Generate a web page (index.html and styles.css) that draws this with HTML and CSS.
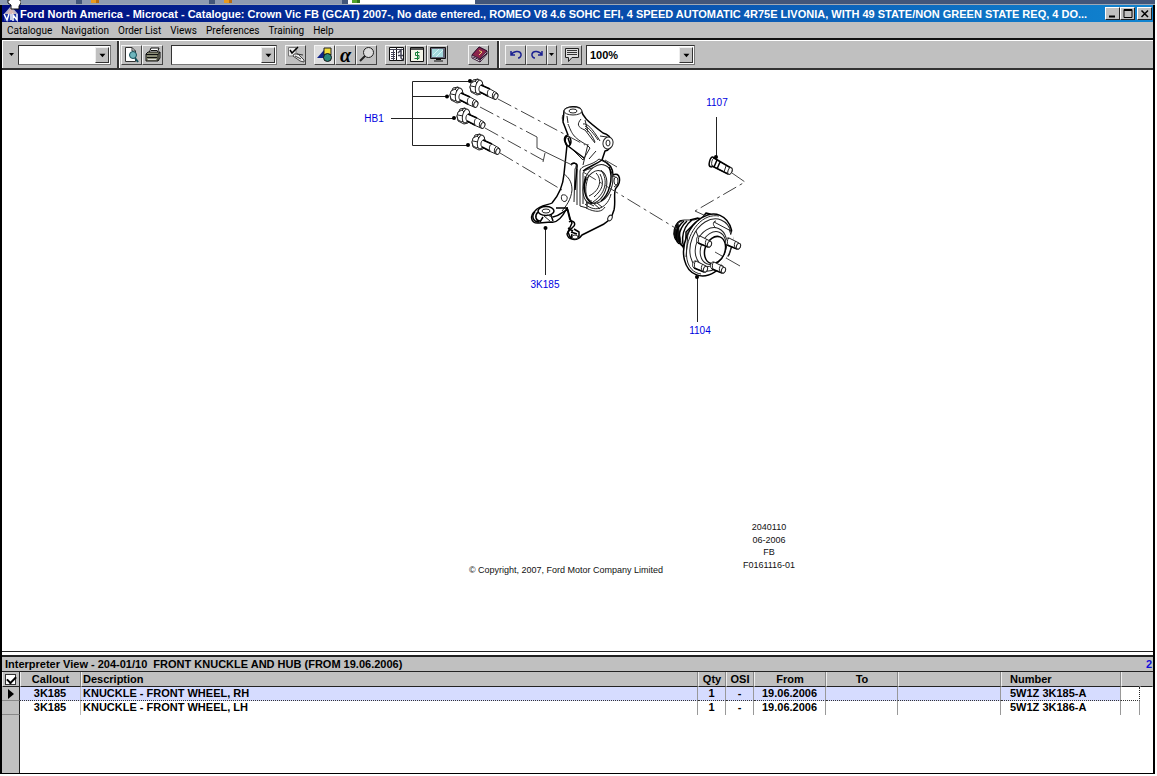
FILE: index.html
```html
<!DOCTYPE html>
<html lang="en">
<head>
<meta charset="utf-8">
<title>Microcat - Catalogue</title>
<link rel="stylesheet" href="styles.css">
</head>
<body>
<div class="taskbar" aria-hidden="true">
  <span class="task task-first"></span>
  <span class="task"><i class="task-icon"></i></span>
  <span class="task"><i class="task-icon"></i></span>
  <span class="task task-active"><i class="task-icon task-icon-green"></i></span>
</div>
<svg class="pointer" viewBox="0 0 14 10" aria-hidden="true"><path d="M1 0V3L4 5V9H12V6L14 3V0Z" fill="#fff" stroke="#111"/><path d="M3 0H12V3H3Z" fill="#fff"/></svg>
<main class="window">
  <header class="titlebar">
    <svg class="app-icon" viewBox="0 0 16 16" aria-hidden="true"><path d="M8 0L15 8H1Z" fill="#b9b4c9"/><path d="M8 2L12 8H4Z" fill="#d8b8b8"/><path d="M1 8H15V15H1Z" fill="#2038a8"/><path d="M1 8L4 14L6 8M8 8V14M10 15V9L14 14V8" stroke="#fff" stroke-width="1.5" fill="none"/></svg>
    <h1 class="title">Ford North America - Microcat - Catalogue: Crown Vic FB (GCAT) 2007-, No date entered., ROMEO V8 4.6 SOHC EFI, 4 SPEED AUTOMATIC 4R75E LIVONIA, WITH 49 STATE/NON GREEN STATE REQ, 4 DO...</h1>
    <div class="window-buttons">
      <button class="win-btn" aria-label="Minimize"><svg viewBox="0 0 12 10"><path d="M2 7.5H8" stroke="#000" stroke-width="2"/></svg></button>
      <button class="win-btn" aria-label="Maximize"><svg viewBox="0 0 12 10"><path d="M2 .5H10V8.500H2ZM2 1.500H10" stroke="#000" fill="none"/></svg></button>
      <button class="win-btn win-close" aria-label="Close"><svg viewBox="0 0 12 10"><path d="M2.500 1.500L9 8M9 1.500L2.500 8" stroke="#000" stroke-width="1.500"/></svg></button>
    </div>
  </header>
  <nav class="menubar">
    <button>Catalogue</button><button>Navigation</button><button>Order List</button><button>Views</button><button>Preferences</button><button>Training</button><button>Help</button>
  </nav>
  <div class="toolbar">
    <div class="tool-group group-history">
      <button class="mini-arrow" aria-label="History"><svg viewBox="0 0 6 4"><path d="M0 0H5L2.500 3Z"/></svg></button>
      <div class="combo combo-nav"><select aria-label="Section"><option></option></select><svg class="drop" viewBox="0 0 14 15"><path d="M4 6H11L7.500 10Z"/></svg></div>
    </div>
    <div class="tool-group group-main">
      <div class="buttons">
        <button class="tool" aria-label="Preview"><svg viewBox="0 0 18 17"><path d="M2.500 1.500H9L12.500 5V15.500H2.500Z" fill="#fff" stroke="#333"/><path d="M9 1.500V5H12.500" fill="none" stroke="#333"/><circle cx="10" cy="9" r="3.500" fill="#6fb6bd" stroke="#174e58"/><path d="M12 12L15 16" stroke="#174e58" stroke-width="2"/></svg></button>
        <button class="tool" aria-label="Print"><svg viewBox="0 0 18 17"><path d="M5 7L7 2H15L13 7" fill="#fff" stroke="#111"/><path d="M2 8L4 6H16V12L14 15H2Z" fill="#8a8c76" stroke="#111"/><path d="M2 8.500H14L16 6M14 8V15M3 11.500H13M7 4.500H13" fill="none" stroke="#111"/><path d="M4 13.500H12" stroke="#ddd"/></svg></button>
      </div>
      <div class="combo combo-search"><select aria-label="Search"><option></option></select><svg class="drop" viewBox="0 0 14 15"><path d="M4 6H11L7.500 10Z"/></svg></div>
      <button class="tool" aria-label="Select callouts"><svg viewBox="0 0 18 17"><path d="M1.500 1.500H9V10H1.500Z" fill="#eee" stroke="#777"/><path d="M3 4L5 7L11 1" fill="none" stroke="#000" stroke-width="1.500"/><path d="M7 8L11 8L17 14V16L13 15L6 10Z" fill="#eee" stroke="#444"/><path d="M10 8L16 9M8 10L14 13" fill="none" stroke="#333"/></svg></button>
      <div class="buttons">
        <button class="tool tool-lit" aria-label="Graphics"><svg viewBox="0 0 18 17"><path d="M1 12L8 4V12Z" fill="#10248a"/><path d="M8 2H15V9H8Z" fill="#f1dd3a" stroke="#222"/><circle cx="11.500" cy="11.500" r="4" fill="#28877c" stroke="#111"/></svg></button>
        <button class="tool alpha" aria-label="Alphabetical">α</button>
        <button class="tool" aria-label="Zoom"><svg viewBox="0 0 18 17"><circle cx="10.500" cy="6.500" r="5" fill="#ddd" stroke="#222"/><path d="M7 10L2 15" stroke="#222" stroke-width="2"/></svg></button>
      </div>
      <div class="buttons view-buttons">
        <button class="tool" aria-label="Parts list"><svg viewBox="0 0 18 17"><path d="M2.500 1.500H9.500V14.500H2.500ZM9.500 1.500H16.500V14.500H9.500Z" fill="#fff" stroke="#111"/><path d="M3 3.500H16M4 6.500H8M4 8.500H8M4 10.500H8M4 12.500H8M6.500 3V14" stroke="#445"/><path d="M11 7L14 4V12L16 14M11 9.500H16" stroke="#445" stroke-width="1.500" fill="none"/></svg></button>
        <button class="tool" aria-label="Pricing"><svg viewBox="0 0 18 17"><path d="M2.500 1.500H15.500V15.500H2.500Z" fill="#f5f5e8" stroke="#111"/><path d="M3 3H15" stroke="#555" stroke-width="2"/><path d="M11.500 6.500H7.500V9.500H11V12.500H6.500M9.500 5V14" fill="none" stroke="#18803a"/></svg></button>
        <button class="tool" aria-label="Monitor"><svg viewBox="0 0 18 17"><path d="M1.500 1.500H16.500V12.500H1.500Z" fill="#667" stroke="#111"/><path d="M3 3H14V11H3Z" fill="#a5dadd"/><path d="M4 9L10 3M7 11L14 4" stroke="#d8f5f5"/><path d="M5 15H14M7 13.500H12" stroke="#111"/></svg></button>
      </div>
      <button class="tool" aria-label="Help book"><svg viewBox="0 0 18 17"><path d="M2 9L9 1L17 5V8L10 16L2 12Z" fill="#fff" stroke="#31122f"/><path d="M2 9L9 1L17 5L10 13Z" fill="#8b244b" stroke="#31122f"/><path d="M10 13V16M3 11L10 14L17 7" stroke="#31122f" fill="none"/><path d="M9 4.500L12 6L9 9" stroke="#f0d267" fill="none"/></svg></button>
    </div>
    <div class="tool-group group-zoom">
      <div class="buttons">
        <button class="tool" aria-label="Undo"><svg viewBox="0 0 18 17"><path d="M4 5V9H8M4 9C6 5 13 4 14 8C14.500 10 13 12 11 12" fill="none" stroke="#1b2191" stroke-width="1.500"/></svg></button>
        <button class="tool" aria-label="Redo"><svg viewBox="0 0 18 17"><path d="M14 5V9H10M14 9C12 5 5 4 4 8C3.500 10 5 12 7 12" fill="none" stroke="#1b2191" stroke-width="1.500"/></svg></button>
        <button class="tool tool-thin" aria-label="Redo list"><svg viewBox="0 0 6 4"><path d="M0 0H5L2.500 3Z"/></svg></button>
      </div>
      <button class="tool note" aria-label="Notes"><svg viewBox="0 0 18 17"><path d="M2.500 2.500H15.500V11.500H9L5.500 15.500V11.500H2.500Z" fill="#ddd" stroke="#222"/><path d="M4 4.500H14M4 6.500H14M4 8.500H14" stroke="#333"/></svg></button>
      <div class="combo combo-zoom"><select aria-label="Zoom level"><option>100%</option></select><svg class="drop" viewBox="0 0 14 15"><path d="M4 6H11L7.500 10Z"/></svg></div>
    </div>
  </div>

  <section class="canvas" aria-label="Exploded view">
    <svg class="diagram" viewBox="2 70 1151 581" role="img" aria-label="Front knuckle and hub">
      <defs>
        <g id="flange-bolt" class="part">
          <path d="M-4 -7L1 -8L5 -5L7 1L4 7L0 8L-6 5L-7 0Z"/>
          <path d="M-6 -4L-2 -6L1 -3L1 3L-2 6L-6 4L-7 0ZM-2 -6L1 -8M1 -3L5 -5M1 3L5 5M-6 -1L-1 0"/>
          <ellipse cx="2" cy="0" rx="3.500" ry="7" transform="rotate(12 2 0)"/>
          <path d="M4 -2L13 2L20 6C22 8 20 13 17 12L10 9L3 5C1 3 2 -1 4 -2Z"/>
          <path class="bold" d="M4 -2L13 2M3 5L11 9"/>
          <path d="M13 2C10 3 10 7 11 9M17 5C15 6 15 10 16 12"/><ellipse cx="19" cy="9.500" rx="2" ry="3" transform="rotate(20 19 9)"/>
        </g>
        <g id="stud" class="part">
          <path d="M1 -4L11 1C14 3 12 8 9 7L-1 3C-4 1 -2 -5 1 -4Z"/>
          <path class="bold" d="M-1 3L9 7"/>
          <path d="M1 -4C-1 -3 -1 1 0 3M8 -1C6 1 6 4 7 6"/><ellipse cx="10.500" cy="4" rx="2" ry="3" transform="rotate(20 10 4)"/>
        </g>
      </defs>

      <g class="leader">
        <path d="M470 81.500H412.500V145.500H469M391 118.500H454M412 96.500H447M545.500 228V275M716.500 117V157M697.500 278V322"/>
        <circle cx="470" cy="81" r="2"/><circle cx="447" cy="96.500" r="2"/><circle cx="454" cy="118" r="2"/><circle cx="468" cy="145" r="2"/><circle cx="545.500" cy="228" r="2"/><circle cx="716" cy="157" r="2"/><circle cx="697" cy="277" r="2"/>
      </g>

      <use href="#flange-bolt" x="477" y="87"/><use href="#flange-bolt" x="457" y="95"/><use href="#flange-bolt" x="464" y="116"/><use href="#flange-bolt" x="479" y="142"/>

      <g class="part knuckle">
        <path class="bold" d="M564 111C566 106 579 105 581 110C583 117 586 120 603 133C614 136 614 149 605 151L602 160C611 164 613 170 613 175C620 171 622 182 616 188C613 192 616 201 614 210C611 220 608 221 604 224L582 235C577 242 568 240 567 234L572 223C569 218 569 211 567 208C562 218 556 223 551 222L539 223C530 224 530 215 535 211C539 205 549 205 552 203C559 195 563 186 564 174L567 145C563 140 564 136 568 135L563 122Z"/>
        <ellipse cx="573" cy="111" rx="9" ry="4"/><ellipse cx="573" cy="111" rx="4" ry="2"/>
        <path d="M563 115C562 117 562 119 563 121M567 116L568 123M581 119C577 124 577 127 585 130L595 143M583 124C587 123 592 128 600 141M585 126C589 128 594 134 598 140M585 128C589 131 593 137 595 142M600 136L607 137M568 124C572 133 572 137 587 145L590 148L583 160L570 147"/>
        <path class="bold" d="M566 137C570 134 573 142 569 146C566 147 564 141 566 137M568 146L584 158M568 138L570 144"/>
        <path d="M585 120L588 132M588 144L583 165M596 151L589 159"/>
        <ellipse cx="608" cy="143" rx="5" ry="6" transform="rotate(15 608 143)"/><ellipse cx="608" cy="143" rx="2" ry="3"/>
        <path d="M564 174C568 177 572 181 572 190C571 200 566 206 562 211M571 164C575 161 578 164 575 169L574 202M577 169V205M580 206V171C580 165 592 166 599 159L607 163M583 204V173C584 169 594 168 604 165M587 205L585 176M580 206L587 208L587 202"/>
        <path class="bold" d="M571 165C573 162 578 163 577 167L575 190M583 171C590 166 595 165 602 160"/>
        <ellipse cx="598" cy="184" rx="14" ry="20" transform="rotate(20 598 184)"/>
        <ellipse cx="595" cy="187" rx="11" ry="17" transform="rotate(20 595 187)"/>
        <path class="bold" d="M586 177C583 187 584 199 592 203M609 167C614 178 609 195 601 201"/>
        <path d="M589 175C582 193 588 201 592 201M601 170C609 181 605 194 593 202M600 174C605 184 602 190 594 197M596 173C602 179 601 190 589 196M585 204C596 214 608 207 611 194M586 208C596 213 602 212 605 207M592 202L600 209M597 203L602 207M586 202L594 206"/>
        <path d="M613 176L617 178L618 184L614 187"/><ellipse cx="616" cy="181" rx="2" ry="4"/>
        <ellipse class="bold" cx="546" cy="211" rx="8" ry="4.500"/><ellipse cx="546" cy="211" rx="4" ry="2"/>
        <path class="bold" d="M535 212C531 216 533 222 539 222M538 212C534 216 536 221 540 221M543 217L540 222M551 215L553 221M556 208L568 208M553 217C560 216 563 211 567 210"/>
        <path d="M544 216L550 221M547 215L553 217M562 195C566 194 569 197 566 201C563 203 560 199 562 195"/>
        <path class="bold" d="M569 222C573 219 577 224 573 227L568 232L570 237L575 239L579 236V232L574 229M568 228L573 231M571 232L577 234M572 234L571 239M567 208L570 220"/>
        <ellipse cx="610" cy="218" rx="2" ry="3" transform="rotate(30 610 218)"/><ellipse cx="575" cy="237" rx="3" ry="2"/>
      </g>

      <g class="part">
        <ellipse class="dark" cx="681" cy="231" rx="7" ry="11" transform="rotate(12 681 231)"/>
        <path d="M678 223L684 220L694 220L700 218L702 252L690 251L684 250L681 243Z"/>
        <path class="bold" d="M684 221C674 229 674 244 681 244M687 221C677 230 677 244 684 247M692 220C680 229 680 248 689 252M696 222L686 232V246M690 220L698 218L702 222M703 217L706 213L710 214L713 217"/>
        <ellipse class="bold" cx="708" cy="245" rx="23" ry="32" transform="rotate(22 708 245)"/>
        <path d="M719 216C689 211 673 270 701 274"/>
        <ellipse cx="711" cy="245" rx="20" ry="27" transform="rotate(22 711 245)"/>
        <ellipse cx="711" cy="247" rx="15" ry="20" transform="rotate(22 711 247)"/>
        <ellipse cx="713" cy="248" rx="12" ry="17" transform="rotate(22 713 248)"/>
        <ellipse class="bold" cx="715" cy="250" rx="10" ry="14" transform="rotate(20 715 250)"/>
        <path d="M714 222L731 231M716 221C713 221 712 225 716 228M729 229L731 235M688 232L686 257M696 231L699 239"/>
        <path class="gap" d="M734 231L731 240M729 257L722 265"/>
        <use href="#stud" x="699" y="240"/><use href="#stud" x="728" y="242"/><use href="#stud" x="713" y="266"/><use href="#stud" x="695" y="265"/>
      </g>
      <g class="part">
        <ellipse class="bold" cx="712" cy="162" rx="2.500" ry="5" transform="rotate(15 712 162)"/>
        <path d="M714 158L731 168C734 170 731 175 728 174L712 166C711 163 712 159 714 158"/>
        <path class="bold" d="M714 158L731 168M712 166L728 174M717 160L714 167M720 162L717 169"/>
        <ellipse cx="730" cy="171" rx="2" ry="3.500" transform="rotate(20 730 171)"/>
        <path d="M726 166L724 172"/>
      </g>
      <g class="axis">
        <path class="dashed" d="M498 99L585 145M480 107L537 137M485 128L543 160M500 153L562 190M583 172L677 229M732 173L745 182L695 211"/>
        <path d="M537 137V148L572 165M543 162L545 153M605 160L617 167M695 211L706 216M715 252L722 256M726 258L740 266"/>
      </g>
      <g class="callout">
        <text x="374" y="122">HB1</text><text x="717" y="106">1107</text><text x="545" y="288">3K185</text><text x="700" y="334">1104</text>
      </g>
      <g class="caption">
        <text x="566" y="573">© Copyright, 2007, Ford Motor Company Limited</text>
        <text x="769" y="530">2040110</text><text x="769" y="543">06-2006</text><text x="769" y="555">FB</text><text x="769" y="568">F0161116-01</text>
      </g>
    </svg>
  </section>

  <section class="interpreter">
    <header class="panel-title"><h2>Interpreter View - 204-01/10&nbsp; FRONT KNUCKLE AND HUB (FROM 19.06.2006)</h2><span class="panel-count">2</span></header>
    <div class="grid">
      <table>
        <colgroup><col class="c-mark"><col class="c-callout"><col><col class="c-small"><col class="c-small"><col class="c-date"><col class="c-date"><col class="c-blank"><col class="c-number"><col class="c-end"><col class="c-rest"></colgroup>
        <thead><tr><th><input type="checkbox" checked aria-label="Select all"></th><th>Callout</th><th class="left">Description</th><th>Qty</th><th>OSI</th><th>From</th><th>To</th><th></th><th class="number">Number</th><th></th><th></th></tr></thead>
        <tbody>
          <tr class="selected"><td class="mark"><svg viewBox="0 0 6 10" aria-label="Current row"><path d="M0 0L6 5L0 10Z"/></svg></td><td>3K185</td><td class="left">KNUCKLE - FRONT WHEEL, RH</td><td>1</td><td>-</td><td>19.06.2006</td><td></td><td></td><td class="number">5W1Z 3K185-A</td><td class="end"></td><td class="rest"></td></tr>
          <tr><td class="mark"></td><td>3K185</td><td class="left">KNUCKLE - FRONT WHEEL, LH</td><td>1</td><td>-</td><td>19.06.2006</td><td></td><td></td><td class="number">5W1Z 3K186-A</td><td class="end"></td><td class="rest"></td></tr>
        </tbody>
      </table>
    </div>
  </section>
</main>
</body>
</html>
```
FILE: styles.css
```css
* { box-sizing: border-box; }
body {
  margin: 0;
  height: 100vh;
  padding: 0 2px 2px 0;
  display: flex;
  flex-direction: column;
  background: #fff;
  color: #000;
  font-family: "Liberation Sans", Arial, sans-serif;
  font-size: 11px;
  overflow: hidden;
}
h1, h2 { margin: 0; font-size: 11px; }
button { font: inherit; color: inherit; padding: 0; border: 0; background: none; border-radius: 0; }
svg { display: block; }

.taskbar { display: flex; gap: 6px; height: 5px; background: #42567a; border-bottom: 1px solid #9fa8b5; flex: none; }
.task { width: 127px; background: #8e9bb2; padding-left: 9px; }
.task-first { width: 76px; }
.task-active { background: #fff; padding-left: 4px; }
.task-icon { display: block; width: 8px; height: 3px; background: #e99a1c; border-right: 3px solid #b86b10; }
.task-icon-green { background: #54a32a; border-color: #2f721c; }
.pointer { position: absolute; left: 7px; top: 0; width: 14px; height: 10px; z-index: 1; }

.window { flex: 1; min-height: 0; display: flex; flex-direction: column; border: solid #000; border-width: 0 2px 1px 2px; }

.titlebar { display: flex; align-items: center; height: 17px; flex: none; background: linear-gradient(90deg, #000c80, #1084d0); color: #fff; padding: 0 1px 0 0; }
.app-icon { width: 16px; height: 16px; margin: 0 1px 0 1px; flex: none; }
.title { flex: 1; min-width: 0; white-space: nowrap; overflow: hidden; }
.window-buttons { display: flex; flex: none; }
.win-btn { width: 15px; height: 13px; padding: 1px; background: #c0c0c0; border: 1px solid; border-color: #fff #222 #222 #fff; }
.win-btn svg { width: 12px; height: 10px; }
.win-close { margin-left: 2px; }

.menubar { display: flex; gap: 9px; align-items: center; height: 18px; padding-left: 5px; flex: none; background: #c0c0c0; border-bottom: 2px solid #111; font-family: Roboto, sans-serif; font-size: 10px; }

.toolbar { display: flex; flex: none; height: 30px; background: #c0c0c0; border-top: 1px solid #fff; border-bottom: 2px solid #333; }
.tool-group { display: flex; align-items: center; border-left: 1px solid #fff; border-right: 2px solid #333; }
.tool-group:last-child { border-right: 0; }
.group-history { width: 117px; padding-left: 4px; gap: 2px; }
.group-main { width: 380px; padding-left: 1px; gap: 8px; }
.view-buttons { margin-right: 12px; }
.group-zoom { padding-left: 5px; gap: 4px; }
.buttons { display: flex; }
.tool { display: grid; place-items: center; width: 21px; height: 20px; background: #c0c0c0; border: 1px solid; border-color: #f4f4f4 #444 #444 #f4f4f4; flex: none; }
.tool svg { width: 18px; height: 17px; }
.group-zoom .tool-thin { width: 10px; }
.tool.tool-thin svg, .mini-arrow svg { width: 6px; height: 4px; }
.tool-lit { background: #dedede; }
.alpha { font: italic bold 20px/16px "Liberation Serif", serif; }
.mini-arrow { width: 9px; display: grid; place-items: center; }
.combo { display: flex; height: 20px; background: #fff; border: 1px solid #333; border-right-color: #777; border-bottom-color: #777; }
.combo select { flex: 1; min-width: 0; appearance: none; border: 0; background: transparent; padding: 0 3px; font: bold 11px "Liberation Sans", Arial, sans-serif; color: #000; }
.drop { width: 14px; height: 16px; margin: 1px; background: #c0c0c0; border: 1px solid; border-color: #eee #333 #333 #eee; pointer-events: none; }
.combo-nav { width: 93px; }
.combo-search { width: 106px; }
.combo-zoom { width: 109px; }

.canvas { flex: 1; min-height: 0; background: #fff; }
.diagram { width: 100%; height: 100%; }
.part { fill: #fff; stroke: #222; stroke-width: 1; stroke-linejoin: round; }
.knuckle path + path, .knuckle ellipse ~ path { fill: none; }
.part .bold { stroke: #000; stroke-width: 1.5; }
.part .dark { fill: #111; stroke: #000; }
.part .gap { fill: none; stroke: #fff; stroke-width: 3; }
.part path[class="bold"]:not(:first-child) { fill: none; }
.leader path { fill: none; stroke: #222; stroke-width: 1; }
.leader circle { fill: #000; }
.axis path { fill: none; stroke: #444; stroke-width: 1; }
.axis .dashed { stroke-dasharray: 15 4 3 4; }
.callout, .caption { font-size: 10px; text-anchor: middle; fill: #0000e0; }
.caption { font-size: 9px; fill: #111; }

.interpreter { flex: none; height: 122px; display: flex; flex-direction: column; border-top: 1px solid #222; padding-top: 3px; background: #fff; }
.panel-title { display: flex; justify-content: space-between; align-items: center; height: 17px; flex: none; padding: 0 1px 0 3px; background: #c0c0c0; border-top: 2px solid #222; border-bottom: 1px solid #222; }
.panel-count { color: #1010d8; font-weight: bold; }
.grid { flex: 1; background: linear-gradient(90deg, #c0c0c0 17px, #222 17px, #222 18px, #fff 18px); }
table { width: 100%; table-layout: fixed; border-collapse: separate; border-spacing: 0; font-size: 11px; line-height: 13px; font-weight: bold; }
th, td { padding: 0; height: 14px; text-align: center; white-space: nowrap; border-right: 1px solid #999; }
td { vertical-align: top; }
th { height: 15px; background: #c0c0c0; border-bottom: 1px solid #222; border-left: 1px solid #eee; border-right-color: #888; }
th:first-child { border-right-color: #222; }
th:last-child, .rest { border-color: transparent; }
th:last-child { border-bottom-color: #222; border-left-color: #c0c0c0; }
th:nth-last-child(2) { border-right-color: #c0c0c0; }
td.left { text-align: left; padding-left: 2px; }
th.left { text-align: left; padding-left: 1px; }
td.number { text-align: left; padding-left: 9px; }
th.number { text-align: left; padding-left: 8px; }
td.mark { background: #c0c0c0; border-right-color: #222; border-bottom: 1px solid #888; }
.mark svg { width: 6px; height: 10px; margin: 2px 0 0 6px; }
td:nth-child(2) { border-right-color: #bbb; }
.selected td { background: #d6dcff; border-bottom: 1px dotted #333; }
.selected td.mark { background: #c0c0c0; border-bottom: 1px solid #888; }
.selected td.end { background: #fff; border-right: 1px dotted #222; }
.selected td.rest { background: #fff; border-bottom: 0; }
.c-mark { width: 18px; }
.c-callout { width: 61px; }
.c-small { width: 28px; }
.c-date { width: 72px; }
.c-blank { width: 103px; }
.c-number { width: 120px; }
.c-end { width: 19px; }
.c-rest { width: 13px; }
input[type="checkbox"] { appearance: none; display: block; width: 11px; height: 11px; margin: 0 0 0 2px; background: #fff; border: 1px solid #333; }
input[type="checkbox"]:checked::before { content: ""; display: block; width: 7px; height: 4px; margin: 1px; border: solid #000; border-width: 0 0 2px 2px; transform: rotate(-45deg); }
```
